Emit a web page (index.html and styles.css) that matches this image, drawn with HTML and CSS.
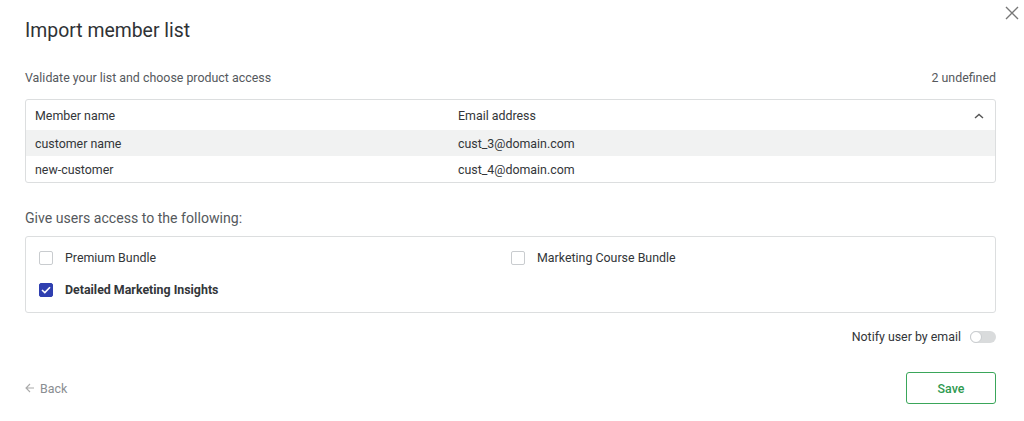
FILE: index.html
```html
<!DOCTYPE html>
<html lang="en">
<head>
<meta charset="UTF-8">
<meta name="viewport" content="width=device-width, initial-scale=1.0">
<title>Import member list</title>
<link rel="stylesheet" href="styles.css">
</head>
<body>
<div class="modal">
    <button class="close_btn" aria-label="Close">
        <svg width="14" height="14" viewBox="0 0 14 14"><path d="M1 1L13 13M13 1L1 13" stroke="#777" stroke-width="1.4" fill="none"/></svg>
    </button>
    <h1 class="title">Import member list</h1>

    <div class="sub_row">
        <span>Validate your list and choose product access</span>
        <span>2 undefined</span>
    </div>

    <div class="table">
        <div class="table_row head">
            <span>Member name</span>
            <span>Email address</span>
            <svg class="chevron" width="10" height="6" viewBox="0 0 10 6"><path d="M1 5L5 1.5L9 5" stroke="#555" stroke-width="1.4" fill="none"/></svg>
        </div>
        <div class="table_row shaded">
            <span>customer name</span>
            <span>cust_3@domain.com</span>
        </div>
        <div class="table_row">
            <span>new-customer</span>
            <span>cust_4@domain.com</span>
        </div>
    </div>

    <h2 class="section_title">Give users access to the following:</h2>

    <div class="options">
        <label class="option">
            <span class="box"></span>
            <span>Premium Bundle</span>
        </label>
        <label class="option">
            <span class="box"></span>
            <span>Marketing Course Bundle</span>
        </label>
        <label class="option checked">
            <span class="box">
                <svg width="10" height="8" viewBox="0 0 10 8"><path d="M1 4L3.8 6.6L9 1.2" stroke="#fff" stroke-width="1.6" fill="none"/></svg>
            </span>
            <span>Detailed Marketing Insights</span>
        </label>
    </div>

    <div class="notify">
        <span>Notify user by email</span>
        <span class="toggle"><span class="knob"></span></span>
    </div>

    <div class="footer">
        <button class="back_btn">
            <svg width="10" height="10" viewBox="0 0 10 10"><path d="M9 5H1.5M5 1L1 5L5 9" stroke="#aaa" stroke-width="1.1" fill="none"/></svg>
            Back
        </button>
        <button class="save_btn">Save</button>
    </div>
</div>
</body>
</html>
```

FILE: styles.css
```css
* {
    margin: 0;
    padding: 0;
    box-sizing: border-box;
    font-family: Roboto, "Liberation Sans", sans-serif;
}

body {
    background: #ffffff;
    color: #333639;
}

.modal {
    position: relative;
    width: 1024px;
    height: 421px;
    padding: 19px 28px 0 25px;
}

.close_btn {
    position: absolute;
    top: 6px;
    right: 5px;
    border: none;
    background: none;
    width: 14px;
    height: 14px;
    cursor: pointer;
}

.close_btn svg {
    display: block;
}

.title {
    font-size: 19.4px;
    font-weight: 400;
    line-height: 24px;
    color: #2f3235;
}

.sub_row {
    display: flex;
    justify-content: space-between;
    font-size: 12.4px;
    line-height: 16px;
    color: #55595d;
    margin-top: 27px;
}

.table {
    margin-top: 13px;
    border: 1px solid #dcdedf;
    border-radius: 3px;
    overflow: hidden;
}

.table_row {
    position: relative;
    display: grid;
    grid-template-columns: 423px 1fr;
    align-items: center;
    height: 26px;
    padding: 0 9px;
    font-size: 12.4px;
    color: #333639;
}

.table_row.head {
    height: 30px;
}

.table_row.shaded {
    background: #f1f2f2;
}

.chevron {
    position: absolute;
    right: 11px;
    top: 13px;
}

.section_title {
    font-size: 14.1px;
    font-weight: 400;
    line-height: 18px;
    color: #55595d;
    margin-top: 26px;
}

.options {
    margin-top: 9px;
    border: 1px solid #dcdedf;
    border-radius: 3px;
    display: grid;
    grid-template-columns: 472px 1fr;
    row-gap: 14px;
    padding: 12px 13px 13px;
}

.option {
    display: flex;
    align-items: center;
    gap: 12px;
    font-size: 12.4px;
    line-height: 18px;
    color: #333639;
    cursor: pointer;
}

.box {
    width: 14px;
    height: 14px;
    border: 1px solid #c9cccf;
    border-radius: 2px;
    background: #fff;
    display: flex;
    align-items: center;
    justify-content: center;
}

.option.checked {
    font-weight: 700;
}

.option.checked .box {
    background: #2f3fb0;
    border-color: #2f3fb0;
}

.notify {
    display: flex;
    justify-content: flex-end;
    align-items: center;
    gap: 9px;
    margin-top: 16px;
    font-size: 12.4px;
    color: #333639;
}

.toggle {
    width: 26px;
    height: 12px;
    border-radius: 6px;
    background: #d9dbdc;
    position: relative;
}

.knob {
    position: absolute;
    left: 0;
    top: 0;
    width: 12px;
    height: 12px;
    border-radius: 50%;
    background: #fff;
    border: 1px solid #c9cccf;
}

.footer {
    display: flex;
    justify-content: space-between;
    align-items: center;
    margin-top: 28px;
}

.back_btn {
    display: flex;
    align-items: center;
    gap: 5px;
    border: none;
    background: none;
    font-size: 12.4px;
    color: #8a8e92;
    cursor: pointer;
}

.save_btn {
    width: 90px;
    height: 32px;
    border: 1px solid #3aa65a;
    border-radius: 3px;
    background: #fff;
    color: #2e9a4f;
    font-size: 12.4px;
    font-weight: 500;
    cursor: pointer;
}
```
